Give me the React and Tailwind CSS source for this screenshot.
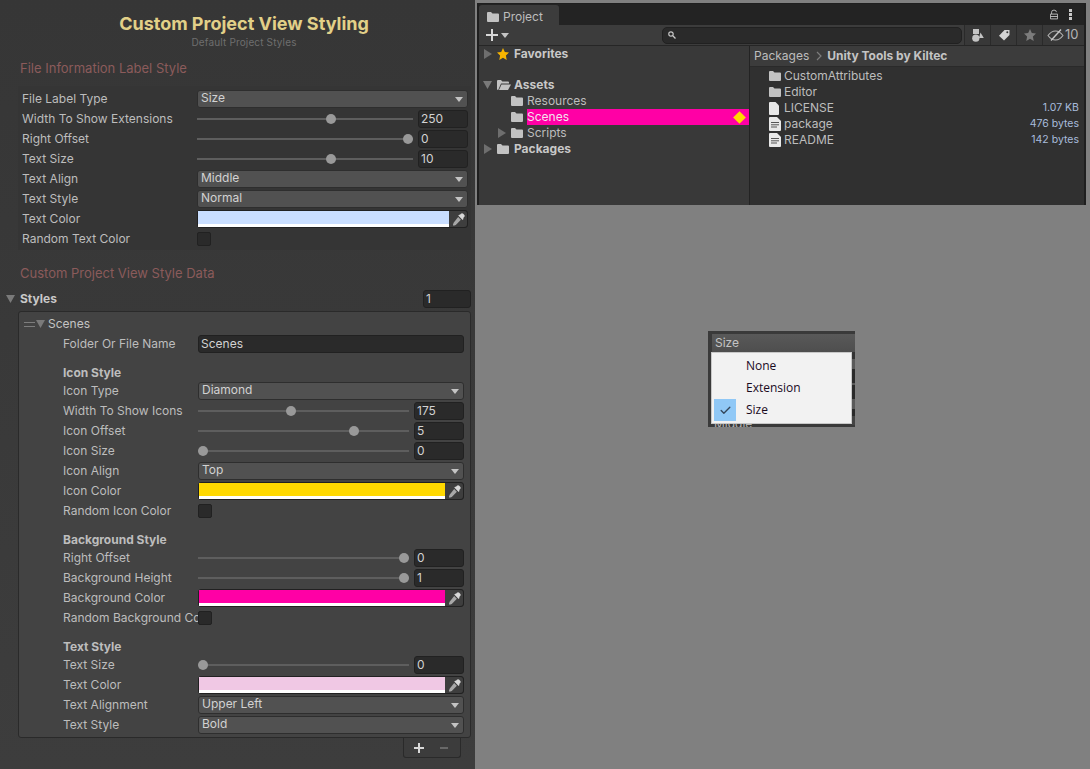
import React from "react";
import { Check } from "lucide-react";

const fileRows = [
  { type: "select", label: "File Label Type", value: "Size" },
  { type: "slider", label: "Width To Show Extensions", pct: 62.5, value: "250" },
  { type: "slider", label: "Right Offset", pct: 100, value: "0" },
  { type: "slider", label: "Text Size", pct: 62.5, value: "10" },
  { type: "select", label: "Text Align", value: "Middle" },
  { type: "select", label: "Text Style", value: "Normal" },
  { type: "color", label: "Text Color", color: "bg-[#c9deff]" },
  { type: "check", label: "Random Text Color" },
];

const iconRows = [
  { type: "select", label: "Icon Type", value: "Diamond" },
  { type: "slider", label: "Width To Show Icons", pct: 44, value: "175" },
  { type: "slider", label: "Icon Offset", pct: 75, value: "5" },
  { type: "slider", label: "Icon Size", pct: 0, value: "0" },
  { type: "select", label: "Icon Align", value: "Top" },
  { type: "color", label: "Icon Color", color: "bg-[#ffd900]" },
  { type: "check", label: "Random Icon Color" },
];

const backgroundRows = [
  { type: "slider", label: "Right Offset", pct: 100, value: "0" },
  { type: "slider", label: "Background Height", pct: 100, value: "1" },
  { type: "color", label: "Background Color", color: "bg-[#ff00a5]" },
  { type: "check", label: "Random Background Color" },
];

const textRows = [
  { type: "slider", label: "Text Size", pct: 0, value: "0" },
  { type: "color", label: "Text Color", color: "bg-[#f0c8e4]" },
  { type: "select", label: "Text Alignment", value: "Upper Left" },
  { type: "select", label: "Text Style", value: "Bold" },
];

const files = [
  { name: "CustomAttributes", icon: "folder" },
  { name: "Editor", icon: "folder" },
  { name: "LICENSE", icon: "file", size: "1.07 KB" },
  { name: "package", icon: "doc", size: "476 bytes" },
  { name: "README", icon: "doc", size: "142 bytes" },
];

const menuItems = ["None", "Extension", "Size"];

// what shows behind the popup's right edge
const stubs = [
  "h-[7px] bg-[#333333]",
  "h-[10px] bg-[#5a5a5a]",
  "h-[14px] bg-[#2a2a2a]",
  "h-[2px] bg-[#5a5a5a]",
  "h-[14px] bg-[#2a2a2a]",
  "h-[10px] bg-[#5a5a5a]",
  "h-[7px] bg-[#2a2a2a]",
  "h-[9px] bg-[#444444]",
];

const Caret = ({ className = "" }) => (
  <svg viewBox="0 0 8 5" className={`w-2 h-[5px] ${className}`}>
    <path d="M0 0h8L4 5z" fill="#c4c4c4" />
  </svg>
);

const FoldRight = ({ className = "" }) => (
  <svg viewBox="0 0 8 10" className={`w-2 h-2.5 ${className}`}>
    <path d="M0 0l8 5-8 5z" fill="#6e6e6e" />
  </svg>
);

const FoldDown = ({ className = "" }) => (
  <svg viewBox="0 0 9 8" className={`w-[9px] h-2 ${className}`}>
    <path d="M0 0h9L4.500 8z" fill="#7a7a7a" />
  </svg>
);

const Folder = () => (
  <svg viewBox="0 0 12 10" className="w-3 h-2.5 shrink-0">
    <path d="M0 1a1 1 0 011-1h3l1.500 1.600H11a1 1 0 011 1V9a1 1 0 01-1 1H1a1 1 0 01-1-1z" fill="#c2c2c2" />
  </svg>
);

const OpenFolder = () => (
  <svg viewBox="0 0 14 10" className="w-3.5 h-2.5 shrink-0 -mr-0.5">
    <path d="M0 1a1 1 0 011-1h3l1.300 1.400H11a1 1 0 011 1V3.500H4L1.200 10H1a1 1 0 01-1-1z" fill="#c2c2c2" />
    <path d="M4.500 4.500H14L11 10H2z" fill="#c2c2c2" />
  </svg>
);

const FileIcon = () => (
  <svg viewBox="0 0 10 13" className="w-2.5 h-[13px] shrink-0">
    <path d="M0 1a1 1 0 011-1h5.500L10 3.500V12a1 1 0 01-1 1H1a1 1 0 01-1-1z" fill="#e8e8e8" />
  </svg>
);

const DocIcon = () => (
  <svg viewBox="0 0 12 14" className="w-3 h-3.5 shrink-0">
    <path d="M0 1a1 1 0 011-1h7l4 4v9a1 1 0 01-1 1H1a1 1 0 01-1-1z" fill="#e8e8e8" />
    <path d="M2 5.500h8M2 7.800h8M2 10h6" stroke="#555" strokeWidth="1" />
  </svg>
);

const Star = ({ fill = "#f7b500", className = "w-3 h-3" }) => (
  <svg viewBox="0 0 24 24" className={`shrink-0 ${className}`}>
    <path d="M12 0l3.600 8 8.400 1-6.200 5.800L19.400 24 12 19.400 4.600 24l1.600-9.200L0 9l8.400-1z" fill={fill} />
  </svg>
);

const Dropper = () => (
  <svg viewBox="0 0 12 12" className="w-[13px] h-[13px]">
    <path d="M7.200 1.800l1-1a1.600 1.600 0 012.200 0l.8.8a1.600 1.600 0 010 2.200l-1 1 .6.6-1 1-4-4 1-1z" fill="#d8d8d8" />
    <path d="M5.700 3.800l2.500 2.500-4.700 4.700-2 .7-.7-.7.7-2z" fill="#a8a8a8" />
  </svg>
);

const Select = ({ value }) => (
  <div className="flex-1 h-[18px] bg-[#515151] rounded-[3px] border border-[#2e2e2e] flex items-center justify-between pl-[3px] pr-[2px] text-[#d2d2d2]">
    <span className="relative -top-px">{value}</span>
    <Caret className="mr-[2px]" />
  </div>
);

const NumberField = ({ value, className = "" }) => (
  <div className={`h-[18px] bg-[#2a2a2a] border border-[#212121] rounded-[3px] pl-[2px] flex items-center text-[#d2d2d2] ${className}`}>
    {value}
  </div>
);

const Slider = ({ pct, value }) => (
  <div className="flex-1 flex items-center gap-[5px]">
    <div className="relative flex-1 h-[2px] bg-[#5e5e5e]">
      <div
        className="absolute -top-1 w-2.5 h-2.5 rounded-full bg-[#999999] -ml-[5px]"
        style={{ left: `calc(5px + (100% - 10px) * ${pct / 100})` }}
      />
    </div>
    <NumberField value={value} className="w-[50px]" />
  </div>
);

const ColorField = ({ color }) => (
  <div className="flex-1 h-[18px] flex rounded-[3px] bg-[#2a2a2a] border border-[#212121]">
    <div className="flex-1 flex flex-col bg-white">
      <div className={`h-[13px] ${color}`} />
    </div>
    <div className="w-[18px] bg-[#3e3e3e] rounded-r-[3px] flex items-center justify-center">
      <Dropper />
    </div>
  </div>
);

const Checkbox = () => (
  <div className="w-3.5 h-3.5 bg-[#2a2a2a] border border-[#212121] rounded-[2px]" />
);

const Row = ({ row, labelWidth }) => (
  <div className="h-5 flex items-center">
    <div className={`${labelWidth} shrink-0 overflow-hidden whitespace-nowrap text-[#bdbdbd]`}>{row.label}</div>
    {row.type === "select" && <Select value={row.value} />}
    {row.type === "slider" && <Slider pct={row.pct} value={row.value} />}
    {row.type === "color" && <ColorField color={row.color} />}
    {row.type === "check" && <Checkbox />}
  </div>
);

const InnerGroup = ({ title, rows, className = "" }) => (
  <div className={className}>
    {title && <div className="h-4 flex items-center font-bold text-[#bdbdbd]">{title}</div>}
    {rows.map((row) => (
      <Row key={row.label} row={row} labelWidth="w-[135px]" />
    ))}
  </div>
);

const Inspector = () => (
  <div className="w-[475px] h-[769px] shrink-0 bg-gradient-to-b from-[#363636] to-[#3d3d3d] pt-[14px] overflow-hidden">
    <div className="pl-[13px] text-center font-bold text-[18px] leading-5 text-[#e2d088]">Custom Project View Styling</div>
    <div className="pl-[13px] text-center text-[10px] leading-3 mt-[2px] text-[#6e6e6e] tracking-[0.15px]">Default Project Styles</div>
    <div className="mt-[13px] ml-5 h-4 flex items-center text-[13px] text-[#8b5b5b]">File Information Label Style</div>

    <div className="mt-[9px] ml-[18px] mr-1 bg-[#353535] pt-[3px] pl-1 pr-[3px] pb-px">
      {fileRows.map((row) => (
        <Row key={row.label} row={row} labelWidth="w-[175px]" />
      ))}
    </div>

    <div className="mt-[16px] ml-5 h-4 flex items-center text-[13px] text-[#8b5b5b]">Custom Project View Style Data</div>

    <div className="mt-[7px] h-5 flex items-center pl-[6px] pr-1">
      <FoldDown />
      <span className="ml-[5px] font-bold text-[#c8c8c8]">Styles</span>
      <NumberField value="1" className="ml-auto w-[48px]" />
    </div>

    <div className="mt-[2px] ml-[18px] mr-1 h-[427px] bg-[#434343] border border-[#2a2a2a] rounded-[3px]">
      <div className="h-[22px] mt-[1px] flex items-center pl-[5px]">
        <div className="w-[11px] h-[5px] border-y border-[#7d7d7d]" />
        <FoldDown className="ml-px" />
        <span className="ml-[3px] text-[#c4c4c4]">Scenes</span>
      </div>
      <div className="pl-[44px] pr-[6px]">
        <div className="h-5 -mt-px flex items-center">
          <div className="w-[135px] shrink-0 text-[#bdbdbd]">Folder Or File Name</div>
          <div className="flex-1 h-[18px] bg-[#2a2a2a] border border-[#212121] rounded-[3px] pl-[2px] flex items-center text-[#d2d2d2]">Scenes</div>
        </div>
        <InnerGroup title="Icon Style" rows={iconRows} className="mt-[11px]" />
        <InnerGroup title="Background Style" rows={backgroundRows} className="mt-[11px]" />
        <InnerGroup title="Text Style" rows={textRows} className="mt-[11px]" />
      </div>
    </div>

    <div className="ml-[403px] w-[58px] h-5 bg-[#3c3c3c] border border-t-0 border-[#2a2a2a] rounded-b-[3px] flex items-center justify-center gap-[15px] pr-px">
      <svg viewBox="0 0 10 10" className="w-2.5 h-2.5"><path d="M5 0v10M0 5h10" stroke="#d8d8d8" strokeWidth="2" /></svg>
      <svg viewBox="0 0 10 10" className="w-2.5 h-2.5"><path d="M1 5h8" stroke="#777" strokeWidth="1.500" /></svg>
    </div>
  </div>
);

const TreeRow = ({ indent, fold, icon, label, bold, selected }) => (
  <div className={`h-4 flex items-center ${indent}`}>
    {fold}
    {icon}
    <div className={`${bold ? "ml-[5px] font-bold text-[#c8c8c8]" : "ml-1 text-[#bdbdbd]"} flex-1 h-4 flex items-center ${selected ? "bg-[#ff00a5] !text-[#f4e2ee] justify-between" : ""}`}>
      <span>{label}</span>
      {selected && <span className="w-[9px] h-[9px] rotate-45 bg-[#ffd900] mr-[5px]" />}
    </div>
  </div>
);

const ToolbarButton = ({ children, className = "w-[26px] justify-center" }) => (
  <div className={`${className} h-5 bg-[#383838] border-l border-[#2a2a2a] flex items-center`}>{children}</div>
);

const ProjectWindow = () => (
  <div className="mt-[3px] ml-[2px] mr-1 h-[202px] bg-[#1f1f1f] pl-[2px] pr-[2px] pt-px flex flex-col text-[#bdbdbd]">
    <div className="h-[21px] bg-[#232323] flex justify-between">
      <div className="w-[80px] mt-px bg-[#3c3c3c] rounded-t-[3px] flex items-center pl-2 pt-1 gap-1 text-[#bdbdbd]">
        <Folder />
        <span>Project</span>
      </div>
      <div className="flex items-center gap-[11px] pr-3">
        <svg viewBox="0 0 10 12" className="w-2 h-[11px]">
          <path d="M2 5.500V3a3 2.500 0 016 0M.5 5.500h9v6h-9zM.5 8.500h9" fill="none" stroke="#c8c8c8" strokeWidth="1.100" />
        </svg>
        <svg viewBox="0 0 3 11" className="w-[3px] h-[11px]">
          <path d="M0 0h3v3H0zM0 4h3v3H0zM0 8h3v3H0z" fill="#c8c8c8" />
        </svg>
      </div>
    </div>

    <div className="h-[21px] bg-[#3c3c3c] border-b border-[#262626] flex items-center">
      <div className="flex items-center ml-[7px] gap-[3px]">
        <svg viewBox="0 0 12 12" className="w-3 h-3"><path d="M6 0v12M0 6h12" stroke="#d8d8d8" strokeWidth="2" /></svg>
        <Caret />
      </div>
      <div className="ml-[153px] w-[300px] h-[17px] bg-[#2a2a2a] border border-[#212121] rounded-[5px] flex items-center pl-[5px]">
        <svg viewBox="0 0 8 8" className="w-2 h-2">
          <circle cx="3" cy="3" r="2.200" fill="none" stroke="#c8c8c8" strokeWidth="1.200" />
          <path d="M4.800 4.800L7.500 7.500" stroke="#c8c8c8" strokeWidth="1.300" />
        </svg>
      </div>
      <div className="ml-auto flex">
        <ToolbarButton>
          <svg viewBox="0 0 12 13" className="w-3 h-[13px]">
            <path d="M1 0h6v5H1z" fill="#c4c4c4" />
            <circle cx="3.800" cy="9.200" r="3.600" fill="#c4c4c4" />
            <path d="M8.500 3.500l3.300 5.500H7z" fill="#c4c4c4" />
          </svg>
        </ToolbarButton>
        <ToolbarButton>
          <svg viewBox="0 0 12 12" className="w-3 h-3">
            <path d="M6.500 1H11.500V6L6 11.500 1 6.800z" fill="#d4d4d4" />
            <circle cx="9.300" cy="3.200" r="1" fill="#383838" />
          </svg>
        </ToolbarButton>
        <ToolbarButton>
          <Star fill="#7c7c7c" className="w-3 h-3" />
        </ToolbarButton>
        <ToolbarButton className="w-[42px] pl-1 gap-px">
          <svg viewBox="0 0 17 12" className="w-[17px] h-3">
            <path d="M1 6.500C3.500 3 6 2 8.500 2s5 1 7.500 4.500C13.500 10 11 11 8.500 11S3.500 10 1 6.500z" fill="none" stroke="#b0b0b0" strokeWidth="1.100" />
            <path d="M4 11.500L14 .5" stroke="#c4c4c4" strokeWidth="1.400" />
          </svg>
          <span className="text-[13px] text-[#b4b4b4]">10</span>
        </ToolbarButton>
      </div>
    </div>

    <div className="flex-1 flex min-h-0">
      <div className="w-[271px] bg-[#393939] border-r border-[#232323] shrink-0">
        <TreeRow indent="pl-[5px]" fold={<FoldRight className="mr-[5px]" />} icon={<Star />} label="Favorites" bold />
        <div className="h-[15px]" />
        <TreeRow indent="pl-[4px]" fold={<FoldDown className="mr-[5px]" />} icon={<OpenFolder />} label="Assets" bold />
        <TreeRow indent="pl-[32px]" icon={<Folder />} label="Resources" />
        <TreeRow indent="pl-[32px]" icon={<Folder />} label="Scenes" selected />
        <TreeRow indent="pl-[19px]" fold={<FoldRight className="mr-[5px]" />} icon={<Folder />} label="Scripts" />
        <TreeRow indent="pl-[5px]" fold={<FoldRight className="mr-[5px]" />} icon={<Folder />} label="Packages" bold />
      </div>
      <div className="flex-1 bg-[#303030]">
        <div className="h-[21px] bg-[#3c3c3c] border-b border-[#2a2a2a] flex items-center pl-1">
          <span>Packages</span>
          <svg viewBox="0 0 6 10" className="w-[6px] h-2.5 ml-[7px] mr-[5px]"><path d="M1 1l4 4-4 4" fill="none" stroke="#7d7d7d" strokeWidth="1.200" /></svg>
          <span className="font-bold text-[#c4c4c4]">Unity Tools by Kiltec</span>
        </div>
        <div className="pt-[1px]">
          {files.map((f) => (
            <div key={f.name} className="h-4 flex items-center pl-[19px] pr-[5px]">
              <div className="w-[15px] flex">
                {f.icon === "folder" && <Folder />}
                {f.icon === "file" && <FileIcon />}
                {f.icon === "doc" && <DocIcon />}
              </div>
              <span>{f.name}</span>
              {f.size && <span className="ml-auto text-[10.5px] text-[#a8bcdc]">{f.size}</span>}
            </div>
          ))}
        </div>
      </div>
    </div>
  </div>
);

const DropdownOverlay = () => (
  <div className="absolute left-[233px] top-[331px] w-[147px] h-[96px] bg-[#3a3a3a]">
    <div className="ml-1 mt-[3px] h-[18px] bg-gradient-to-b from-[#595959] to-[#4e4e4e] flex items-center pl-[3px] text-[#c4c4c4]">Size</div>
    <div className="absolute left-[6px] top-[86px] h-[10px] overflow-hidden text-[#b4b4b4] leading-[14px]">Middle</div>
    <div className="absolute right-0 top-[21px] w-[3px] flex flex-col">
      {stubs.map((stub, i) => (
        <div key={i} className={stub} />
      ))}
    </div>
    <div className="absolute left-[3px] top-[21px] w-[141px] h-[72px] bg-[#f2f2f2] border border-[#c8c8c8] pt-[2px] [font-family:'Open_Sans',sans-serif] text-[#1a0a1e] font-medium">
      {menuItems.map((item) => (
        <div key={item} className="h-[22px] flex items-center">
          <div className={`ml-[2px] w-[22px] h-[22px] flex items-center justify-center ${item === "Size" ? "bg-[#90c8f6]" : ""}`}>
            {item === "Size" && <Check size={13} strokeWidth={2.5} className="text-[#34465a]" />}
          </div>
          <span className="ml-[10px]">{item}</span>
        </div>
      ))}
    </div>
  </div>
);

export default function App() {
  return (
    <div className="w-[1090px] h-[769px] flex overflow-hidden text-xs bg-[#808080] [font-family:Inter,'Liberation_Sans',sans-serif]">
      <Inspector />
      <div className="relative flex-1">
        <ProjectWindow />
        <DropdownOverlay />
      </div>
    </div>
  );
}
